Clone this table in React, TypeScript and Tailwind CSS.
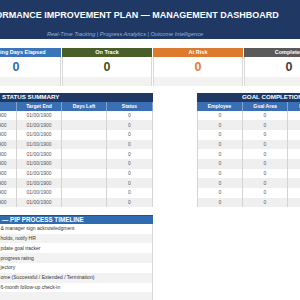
import React from "react";

const rows = Array.from({ length: 10 }, (_, i) => i);

const steps = [
  "& manager sign acknowledgment",
  "holds, notify HR",
  "pdate goal tracker",
  "progress rating",
  "jectory",
  "ome (Successful / Extended / Termination)",
  "6-month follow-up check-in",
  "",
];

function Kpi({ label, bar, color }: { label: string; bar: string; color: string }) {
  return (
    <div className="w-[90px] shrink-0 flex flex-col">
      <div className={`h-[9px] ${bar} flex items-center justify-center text-white font-bold text-[5.5px] leading-none whitespace-nowrap`}>
        {label}
      </div>
      <div className={`h-[20px] border-x border-[#d9d9d9] flex items-center justify-center font-bold text-[12.5px] leading-none ${color}`}>
        0
      </div>
      <div className="h-[9px] bg-[#f2f2f2] border-x border-[#d9d9d9]" />
    </div>
  );
}

export default function App() {
  return (
    <div className="w-[300px] h-[300px] overflow-hidden bg-white font-['Liberation_Sans',Arial,sans-serif]">
      {/* Header */}
      <div className="h-[39px] bg-[#1f3864] ml-[-50px] w-[350px] flex flex-col items-center">
        <div className="mt-[10px] h-[10px] leading-[10px] text-white font-bold text-[9px] whitespace-nowrap">
          PERFORMANCE IMPROVEMENT PLAN — MANAGEMENT DASHBOARD
        </div>
        <div className="mt-[11px] h-[6px] leading-[6px] text-[#8fb4e3] italic text-[5.6px] whitespace-nowrap">
          Real-Time Tracking | Progress Analytics | Outcome Intelligence
        </div>
      </div>

      {/* KPI cards */}
      <div className="mt-[9px] ml-[-29px] flex gap-[1px]">
        <Kpi label="Working Days Elapsed" bar="bg-[#3c74b8]" color="text-[#2e6db3]" />
        <Kpi label="On Track" bar="bg-[#4a5e2a]" color="text-[#3f5224]" />
        <Kpi label="At Risk" bar="bg-[#dc7a2e]" color="text-[#e07b2f]" />
        <Kpi label="Completed" bar="bg-[#5a5a5a]" color="text-[#404040]" />
      </div>

      {/* Tables */}
      <div className="mt-[7px] flex items-start">
        <div className="ml-[-28px] w-[181px] shrink-0 flex flex-col">
          <div className="h-[9px] bg-[#1f3864] flex items-center pl-[30px] text-white font-bold text-[6.2px] leading-none whitespace-nowrap">
            STATUS SUMMARY
          </div>
          <div className="h-[8.5px] bg-[#3b6fb3] flex text-white font-bold text-[5px] leading-none">
            {["Start", "Target End", "Days Left", "Status"].map((h, i) => (
              <div key={h} className={`${i === 3 ? "w-[46px]" : "w-[45px]"} flex items-center justify-center border-r border-[#7fa3d1]`}>
                {h}
              </div>
            ))}
          </div>
          {rows.map((r) => (
            <div key={r} className={`h-[9.7px] flex text-[5px] leading-none text-[#555] ${r % 2 ? "bg-[#efefef]" : "bg-white"}`}>
              <div className="w-[45px] flex items-center justify-center border-r border-[#d4d4d4]">01/00/1900</div>
              <div className="w-[45px] flex items-center justify-center border-r border-[#d4d4d4]">01/00/1900</div>
              <div className="w-[45px] flex items-center justify-center border-r border-[#d4d4d4]"></div>
              <div className="w-[46px] flex items-center justify-center border-r border-[#d4d4d4]">0</div>
            </div>
          ))}

          <div className="mt-[7.5px] h-[9px] bg-[#2f6bb1] border-t border-[#24528c] flex items-center pl-[30px] text-white font-bold text-[6.3px] leading-none whitespace-nowrap">
            — PIP PROCESS TIMELINE
          </div>
          {steps.map((s, i) => (
            <div key={i} className={`h-[9.8px] flex items-center pl-[28.5px] text-[5px] leading-none text-[#333] whitespace-nowrap border-r border-[#d9d9d9] ${i % 2 ? "bg-[#f2f2f2]" : "bg-white"}`}>
              {s}
            </div>
          ))}
        </div>

        <div className="ml-[44px] w-[150px] shrink-0 flex flex-col">
          <div className="h-[9px] bg-[#1f3864] flex items-center pl-[45px] text-white font-bold text-[6.2px] leading-none whitespace-nowrap">
            GOAL COMPLETION
          </div>
          <div className="h-[8.5px] bg-[#3b6fb3] flex text-white font-bold text-[5px] leading-none">
            {["Employee", "Goal Area", "Progress"].map((h, i) => (
              <div key={h} className={`${i === 0 ? "w-[46px]" : "w-[45px]"} flex items-center justify-center border-r border-[#7fa3d1]`}>
                {h}
              </div>
            ))}
          </div>
          {rows.map((r) => (
            <div key={r} className={`h-[9.7px] flex text-[5px] leading-none text-[#555] border-l border-[#d4d4d4] ${r % 2 ? "bg-[#efefef]" : "bg-white"}`}>
              <div className="w-[45px] flex items-center justify-center border-r border-[#d4d4d4]">0</div>
              <div className="w-[45px] flex items-center justify-center border-r border-[#d4d4d4]">0</div>
              <div className="w-[45px] flex items-center justify-center border-r border-[#d4d4d4]"></div>
            </div>
          ))}
        </div>
      </div>
    </div>
  );
}
